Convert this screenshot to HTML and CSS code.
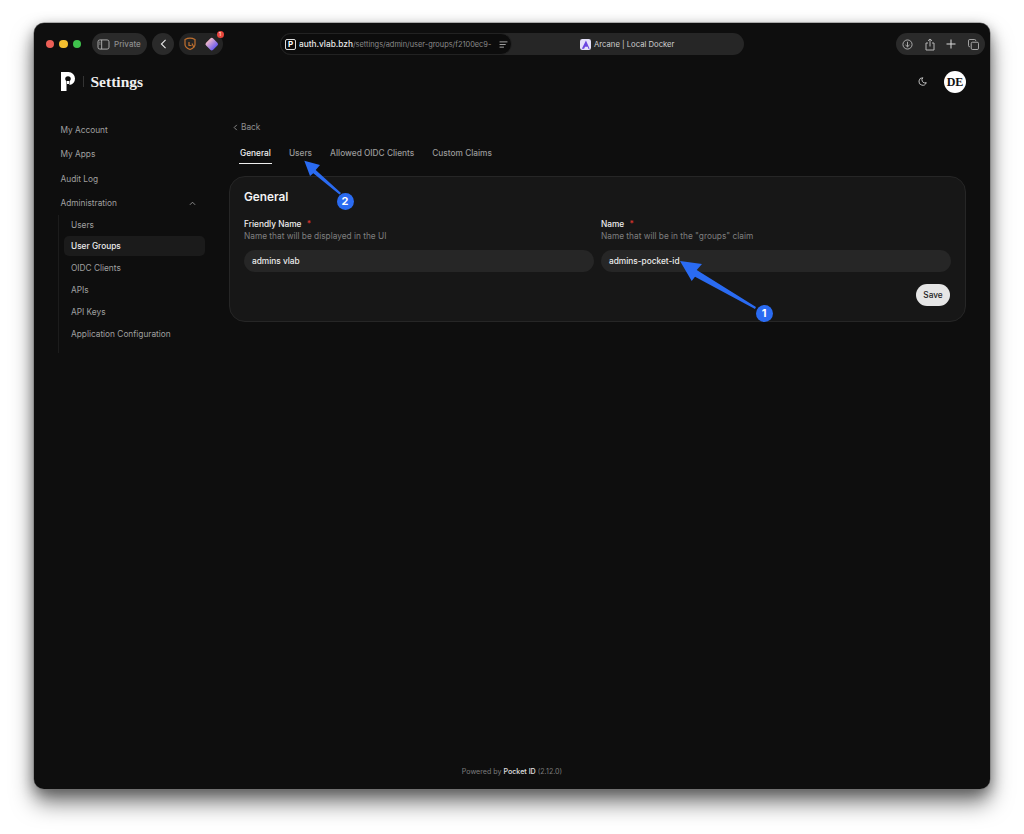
FILE: index.html
```html
<!DOCTYPE html>
<html lang="en">
<head>
    <meta charset="UTF-8">
    <meta name="viewport" content="width=device-width, initial-scale=1.0">
    <title>Pocket ID Settings</title>
    <link rel="stylesheet" href="styles.css">
</head>
<body>
    <div class="window">
        <!-- browser toolbar -->
        <div class="toolbar">
            <div class="lights">
                <span class="light red"></span>
                <span class="light yellow"></span>
                <span class="light green"></span>
            </div>
            <div class="pill private">
                <svg class="tool-icon" viewBox="0 0 14 12" width="13" height="11"><rect x="1" y="1" width="12" height="10" rx="2"/><path d="M5 1v10M2.4 3.5h1.2M2.4 5.5h1.2"/></svg>
                <span>Private</span>
            </div>
            <div class="pill back-btn">
                <svg class="tool-icon bright" viewBox="0 0 8 12" width="7" height="10"><path d="M6.5 1 1.5 6l5 5"/></svg>
            </div>
            <div class="pill extensions">
                <svg class="shield" viewBox="0 0 14 14" width="14" height="14"><path d="M2 2.5c3-1.6 7-1.6 10 0v5c0 2.500-2.500 4-5 5-2-.8-5-2.500-5-5z"/><path d="M6 5v3.500h2.500M9 6.500l2 4"/></svg>
                <span class="ext-gem">
                    <span class="gem"></span>
                    <span class="ext-badge">1</span>
                </span>
            </div>
            <div class="tab-bar">
                <div class="url-pill">
                    <span class="favicon-p">P</span>
                    <span class="url-text"><b>auth.vlab.bzh</b>/settings/admin/user-groups/f2100ec9-</span>
                    <svg class="tool-icon" viewBox="0 0 10 8" width="9" height="7"><path d="M.5 1h9M.5 4h7M.5 7h5"/></svg>
                </div>
                <div class="tab-title">
                    <svg class="arcane" viewBox="0 0 12 12" width="11" height="11"><rect width="12" height="12" rx="2.500" fill="#e4e0fa"/><path d="M6.500 1.500 2 10.500h2.500l1-2h3l.5 2h1.500z" fill="#6b46e0"/></svg>
                    <span>Arcane | Local Docker</span>
                </div>
            </div>
            <div class="pill actions">
                <svg class="tool-icon" viewBox="0 0 12 12" width="11" height="11"><circle cx="6" cy="6" r="5"/><path d="M6 3v5.500M3.800 6.500 6 8.500l2.200-2"/></svg>
                <svg class="tool-icon" viewBox="0 0 10 13" width="10" height="13"><path d="M3 5H1v7h8V5H7M5 8.500V1M3 2.800 5 1l2 1.800"/></svg>
                <svg class="tool-icon plus" viewBox="0 0 10 10" width="10" height="10"><path d="M5 .5v9M.5 5h9"/></svg>
                <svg class="tool-icon" viewBox="0 0 12 12" width="11" height="11"><rect x="3.500" y="3.500" width="8" height="8" rx="1.500"/><path d="M2 8.500c-1 0-1.500-.5-1.500-1.500V2C.5 1 1 .5 2 .5h5c1 0 1.500.5 1.500 1.500"/></svg>
            </div>
        </div>

        <!-- app header -->
        <div class="app-header">
            <div class="brand">
                <svg class="logo" viewBox="0 0 14 19" width="14" height="19"><path fill-rule="evenodd" d="M0 0h7.500A6.500 6.500 0 0 1 14 6.500 6.500 6.500 0 0 1 8.500 12.900V9.300a2.800 2.800 0 1 0-3 0V19H0zM6 9h2v3H6z" fill="#fff"/></svg>
                <span class="brand-divider"></span>
                <span class="brand-title">Settings</span>
            </div>
            <div class="header-right">
                <svg class="moon" viewBox="0 0 12 12" width="9" height="9"><path d="M6.500 1A5 5 0 1 0 11 7.500 4 4 0 0 1 6.500 1z"/></svg>
                <div class="avatar">DE</div>
            </div>
        </div>

        <div class="content">
            <div class="sidebar">
                <a class="nav-item">My Account</a>
                <a class="nav-item">My Apps</a>
                <a class="nav-item">Audit Log</a>
                <a class="nav-item nav-group">
                    Administration
                    <svg class="chevron" viewBox="0 0 8 5" width="7" height="5"><path d="M1 4l3-3 3 3"/></svg>
                </a>
                <div class="subnav">
                    <a class="sub-item">Users</a>
                    <a class="sub-item active">User Groups</a>
                    <a class="sub-item">OIDC Clients</a>
                    <a class="sub-item">APIs</a>
                    <a class="sub-item">API Keys</a>
                    <a class="sub-item">Application Configuration</a>
                </div>
            </div>

            <div class="main">
                <a class="back-link">
                    <svg class="chevron" viewBox="0 0 5 8" width="5" height="7"><path d="M4 1 1 4l3 3"/></svg>
                    Back
                </a>
                <div class="tabs">
                    <a class="tab active">General</a>
                    <a class="tab">Users</a>
                    <a class="tab">Allowed OIDC Clients</a>
                    <a class="tab">Custom Claims</a>
                </div>
                <div class="card">
                    <h2 class="card-title">General</h2>
                    <div class="form-grid">
                        <div class="field">
                            <div class="field-label">Friendly Name <span class="req">*</span></div>
                            <div class="field-desc">Name that will be displayed in the UI</div>
                            <div class="input">admins vlab</div>
                        </div>
                        <div class="field">
                            <div class="field-label">Name <span class="req">*</span></div>
                            <div class="field-desc">Name that will be in the "groups" claim</div>
                            <div class="input">admins-pocket-id</div>
                        </div>
                    </div>
                    <div class="card-actions">
                        <button class="save-btn">Save</button>
                    </div>
                </div>
            </div>
        </div>

        <div class="footer">Powered by <b>Pocket ID</b> (2.12.0)</div>
    </div>

    <!-- annotation arrows on top of the screenshot -->
    <svg class="arrow arrow-one" viewBox="0 0 90 60" width="90" height="60"><path d="M2 3 24 6 18.700 12 78 49 77 51 17 18.700 13.700 23z"/></svg>
    <span class="marker marker-one">1</span>
    <svg class="arrow arrow-two" viewBox="0 0 50 45" width="50" height="45"><path d="M3.300 3.700 19 8 14.700 13 40 36 38.500 37.500 12.300 16.300 9 19z"/></svg>
    <span class="marker marker-two">2</span>
</body>
</html>
```

FILE: styles.css
```css
* {
    box-sizing: border-box;
}
body {
    font-family: Inter, "Liberation Sans", sans-serif;
    margin: 0;
    padding: 23px 34px 0;
    background-color: #fff;
    height: 834px;
    overflow: hidden;
    position: relative;
}
a {
    display: block;
}
.window {
    display: flex;
    flex-direction: column;
    height: 766px;
    background-color: #0e0e0e;
    border-radius: 10px;
    box-shadow: 0 0 0 .5px #777, 0 14px 22px rgba(0,0,0,0.5), 0 4px 14px rgba(0,0,0,0.35);
    color: #fff;
}

/* toolbar */
.toolbar {
    display: flex;
    align-items: center;
    height: 32px;
    margin-top: 5px;
    padding: 0 5px 0 11.500px;
    flex: none;
}
.lights {
    display: flex;
    gap: 5px;
    margin-right: 11px;
}
.light {
    width: 8.500px;
    height: 8.500px;
    border-radius: 50%;
}
.red { background-color: #ec5f57; }
.yellow { background-color: #f4bf2f; }
.green { background-color: #3fc24c; }
.pill {
    display: flex;
    align-items: center;
    height: 22px;
    background-color: #2a2a2a;
    border-radius: 11px;
    flex: none;
}
.private {
    width: 55px;
    padding-left: 5px;
    gap: 4px;
    margin-right: 5px;
    font-size: 8px;
    font-weight: 500;
    color: #8d8d8d;
}
.tool-icon {
    fill: none;
    stroke: #b5b5b5;
    stroke-width: 1;
    flex: none;
}
.tool-icon.bright {
    stroke: #e8e8e8;
    stroke-width: 1.300;
}
.tool-icon.plus {
    stroke: #dcdcdc;
}
.back-btn {
    width: 22px;
    justify-content: center;
    margin-right: 5px;
}
.extensions {
    width: 44px;
    padding-left: 4px;
    gap: 9px;
    background-color: #242424;
}
.shield {
    fill: none;
    stroke: #c0702f;
    stroke-width: 1.200;
}
.ext-gem {
    position: relative;
    display: flex;
}
.gem {
    width: 9.500px;
    height: 9.500px;
    margin: 1px;
    border-radius: 2px;
    transform: rotate(45deg);
    background: linear-gradient(90deg, #f2b8c8, #6a5cf0);
}
.ext-badge {
    position: absolute;
    top: -7px;
    right: -6px;
    width: 7px;
    height: 7px;
    border-radius: 50%;
    background-color: #e8453c;
    font-size: 5px;
    line-height: 7px;
    text-align: center;
}
.tab-bar {
    display: flex;
    align-items: center;
    width: 464px;
    height: 22px;
    margin-left: 57px;
    background-color: #262626;
    border-radius: 11px;
    flex: none;
}
.url-pill {
    display: flex;
    align-items: center;
    width: 232px;
    height: 22px;
    padding: 0 3px 0 4px;
    gap: 3px;
    background-color: #0c0c0c;
    border: 1px solid #222;
    border-radius: 11px;
    flex: none;
}
.favicon-p {
    width: 11px;
    height: 11px;
    border: 1px solid #ddd;
    border-radius: 2px;
    font-size: 8px;
    line-height: 9px;
    font-weight: 700;
    text-align: center;
    flex: none;
}
.url-text {
    flex: 1;
    white-space: nowrap;
    overflow: hidden;
    font-size: 7.400px;
    color: #8a8a8a;
}
.url-text b {
    font-size: 8.300px;
    color: #e8e8e8;
    font-weight: 500;
}
.tab-title {
    flex: 1;
    display: flex;
    align-items: center;
    gap: 3px;
    padding-left: 68px;
    font-size: 7.700px;
    color: #cfcfcf;
}
.actions {
    width: 89px;
    margin-left: auto;
    justify-content: space-between;
    padding: 0 6px;
    background-color: #2a2a2a;
}

/* app header */
.app-header {
    display: flex;
    justify-content: space-between;
    align-items: center;
    height: 43px;
    padding: 0 24px 0 27px;
    flex: none;
}
.brand {
    display: flex;
    align-items: center;
}
.logo {
    display: block;
}
.brand-divider {
    width: 1px;
    height: 11px;
    margin: 0 7px 0 7.500px;
    background-color: #333;
}
.brand-title {
    font-family: "Liberation Serif", serif;
    font-size: 15.500px;
    font-weight: 700;
    color: #f0f0f0;
}
.header-right {
    display: flex;
    align-items: center;
    gap: 17px;
}
.moon {
    fill: none;
    stroke: #cfcfcf;
    stroke-width: 1.200;
}
.avatar {
    width: 22px;
    height: 22px;
    border-radius: 50%;
    background-color: #fff;
    color: #111;
    font-family: "Liberation Serif", serif;
    font-size: 12px;
    font-weight: 700;
    line-height: 22px;
    text-align: center;
}

/* page */
.content {
    display: grid;
    grid-template-columns: 144.500px 1fr;
    column-gap: 24px;
    padding: 15px 24px 0 26.500px;
}
.nav-item {
    display: flex;
    justify-content: space-between;
    align-items: center;
    height: 24.300px;
    font-size: 8.300px;
    color: #a0a0a0;
}
.chevron {
    fill: none;
    stroke: #9a9a9a;
    stroke-width: 1;
    flex: none;
}
.nav-group .chevron {
    margin-right: 9px;
}
.subnav {
    margin: -.5px 0 0 -2.500px;
    padding: 0 0 8px 5px;
    border-left: 1px solid #1c1c1c;
}
.sub-item {
    height: 20px;
    margin-bottom: 1.800px;
    padding-left: 7px;
    border-radius: 5px;
    font-size: 8.300px;
    line-height: 20px;
    color: #a0a0a0;
}
.sub-item.active {
    background-color: #1b1b1b;
    color: #ededed;
    font-weight: 500;
}
.back-link {
    display: flex;
    align-items: center;
    gap: 3px;
    height: 18px;
    padding-left: 4px;
    font-size: 8.300px;
    color: #8e8e8e;
}
.tabs {
    display: flex;
    gap: 18px;
    height: 20px;
    margin-top: 8px;
    padding-left: 11px;
}
.tab {
    font-size: 8.300px;
    font-weight: 500;
    line-height: 18px;
    color: #9a9a9a;
}
.tab.active {
    margin: 0 -1px;
    padding: 0 1px;
    height: 20px;
    border-bottom: 1.500px solid #eee;
    color: #f2f2f2;
}
.card {
    margin-top: 12px;
    padding: 14px 14px 15px;
    background-color: #171717;
    border: 1px solid #262626;
    border-radius: 16px;
}
.card-title {
    margin: 0;
    font-size: 11.800px;
    line-height: 13px;
    font-weight: 600;
    color: #f2f2f2;
}
.form-grid {
    display: grid;
    grid-template-columns: 1fr 1fr;
    column-gap: 7px;
    margin-top: 15px;
}
.field-label {
    font-size: 8.300px;
    line-height: 11px;
    font-weight: 500;
    color: #efefef;
}
.req {
    margin-left: 3px;
    color: #d9342c;
}
.field-desc {
    margin-top: 1px;
    font-size: 8.300px;
    line-height: 11px;
    color: #7f7f7f;
}
.input {
    height: 22px;
    margin-top: 8px;
    padding-left: 8px;
    background-color: #262626;
    border-radius: 11px;
    font-size: 8.300px;
    font-weight: 500;
    line-height: 22px;
    color: #ececec;
}
.card-actions {
    display: flex;
    justify-content: flex-end;
    margin-top: 12px;
    padding-right: 1px;
}
.save-btn {
    width: 34px;
    height: 22px;
    padding: 0;
    background-color: #e6e6e6;
    color: #222;
    border: none;
    border-radius: 11px;
    font-family: inherit;
    font-size: 8.300px;
    font-weight: 500;
}
.footer {
    margin-top: auto;
    padding-bottom: 13px;
    text-align: center;
    font-size: 7.100px;
    line-height: 9px;
    color: #7d7d7d;
}
.footer b {
    color: #e0e0e0;
    font-weight: 500;
}

/* annotations */
.arrow {
    position: absolute;
    fill: #2a6bf2;
}
.arrow-one {
    left: 678px;
    top: 258px;
}
.arrow-two {
    left: 301px;
    top: 157px;
}
.marker {
    position: absolute;
    width: 17px;
    height: 17px;
    border-radius: 50%;
    background-color: #2a6bf2;
    color: #fff;
    font-size: 11px;
    font-weight: 700;
    line-height: 17px;
    text-align: center;
}
.marker-one {
    left: 755.500px;
    top: 305px;
}
.marker-two {
    left: 336.500px;
    top: 192.500px;
}
```
